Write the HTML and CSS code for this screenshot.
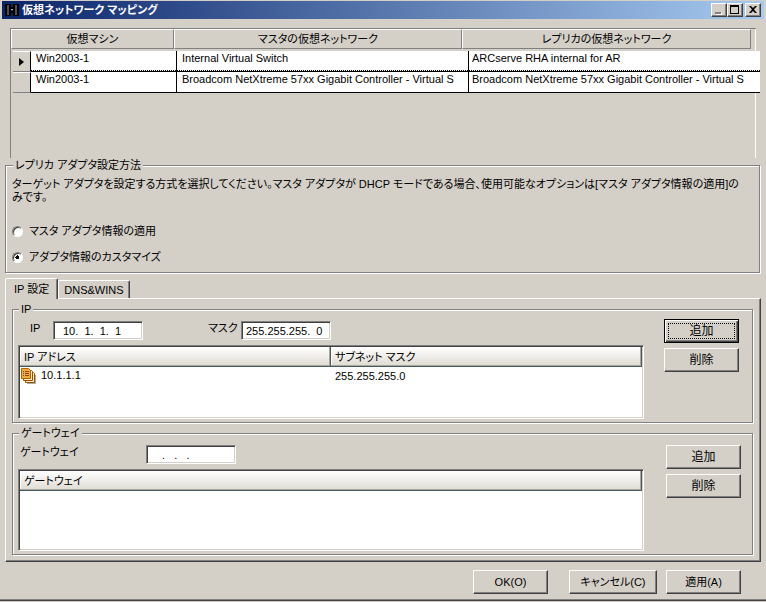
FILE: index.html
```html
<!DOCTYPE html>
<html lang="ja">
<head>
<meta charset="utf-8">
<meta name="viewport" content="width=device-width, initial-scale=1">
<title>仮想ネットワーク マッピング</title>
<link rel="stylesheet" href="styles.css">
</head>
<body>
<main class="window">
  <header class="titlebar">
    <svg class="title-icon" width="14" height="12" viewBox="0 0 14 12" aria-hidden="true">
      <path d="M0 0h6v12H0zM8 0h6v12H8z" fill="#000"/>
      <path d="M2 1h2v10H2zM10 1h2v10h-2z" fill="#505050"/>
      <path d="M6 3h2v2H6zM6 7h2v2H6z" fill="#000"/>
      <path d="M6 5h2v1H6z" fill="#b0b0b0"/>
    </svg>
    <h1 class="title">仮想ネットワーク マッピング</h1>
    <div class="caption-buttons">
      <button class="caption" type="button" aria-label="最小化"><svg width="12" height="11" viewBox="0 0 12 11"><path d="M3 9h6v2H3z" fill="#fff"/><path d="M2 8h6v2H2z" fill="#808080"/></svg></button>
      <button class="caption" type="button" aria-label="最大化"><svg width="12" height="11" viewBox="0 0 12 11"><path d="M1 1h9v9H1zM2 3v6h7V3z" fill="#000" fill-rule="evenodd"/></svg></button>
      <button class="caption caption-close" type="button" aria-label="閉じる"><svg width="12" height="11" viewBox="0 0 12 11"><path d="M2 2h2l2 2 2-2h2L7 5.500l3 3.500H8L6 7 4 9H2l3-3.500z" fill="#000"/></svg></button>
    </div>
  </header>

  <div class="mapping-panel">
    <table class="mapping">
      <thead>
        <tr class="mapping-head"><th>仮想マシン</th><th>マスタの仮想ネットワーク</th><th>レプリカの仮想ネットワーク</th></tr>
      </thead>
      <tbody>
        <tr class="mapping-row current">
          <th class="selector"><svg width="5" height="8" viewBox="0 0 5 8" aria-hidden="true"><path d="M0 0v8l5-4z" fill="#000"/></svg></th>
          <td>Win2003-1</td><td>Internal Virtual Switch</td><td>ARCserve RHA internal for AR</td>
        </tr>
        <tr class="mapping-row">
          <th class="selector"></th>
          <td>Win2003-1</td><td>Broadcom NetXtreme 57xx Gigabit Controller - Virtual S</td><td>Broadcom NetXtreme 57xx Gigabit Controller - Virtual S</td>
        </tr>
      </tbody>
    </table>
  </div>

  <fieldset class="group method">
    <legend>レプリカ アダプタ設定方法</legend>
    <p class="hint">ターゲット アダプタを設定する方式を選択してください。マスタ アダプタが DHCP モードである場合、使用可能なオプションは[マスタ アダプタ情報の適用]の<br>みです。</p>
    <label class="choice"><input type="radio" name="method">マスタ アダプタ情報の適用</label>
    <label class="choice"><input type="radio" name="method" checked>アダプタ情報のカスタマイズ</label>
  </fieldset>

  <div class="tabs" role="tablist">
    <button class="tab active" type="button" role="tab" aria-selected="true">IP 設定</button>
    <button class="tab" type="button" role="tab" aria-selected="false">DNS&amp;WINS</button>
  </div>

  <section class="tab-panel" role="tabpanel">
    <fieldset class="group">
      <legend>IP</legend>
      <div class="editor">
        <div>
          <div class="fields address-fields">
            <label for="ip">IP</label>
            <input class="box box-ip" id="ip" type="text" value="10.  1.  1.  1">
            <label for="mask">マスク</label>
            <input class="box" id="mask" type="text" value="255.255.255.  0">
          </div>
          <div class="list list-ip">
            <table>
              <thead><tr><th>IP アドレス</th><th>サブネット マスク</th></tr></thead>
              <tbody><tr>
                <td><svg class="pages" width="15" height="16" viewBox="0 0 15 16" aria-hidden="true">
                  <path d="M6 7h9v9H6z" fill="#aaa"/>
                  <path d="M4.500 4.500h8l1 1v9h-9z" fill="#ffe8bd" stroke="#9a5200"/>
                  <path d="M2.500 2.500h8l1 1v9h-9z" fill="#ffe8bd" stroke="#9a5200"/>
                  <path d="M.5 .5h7l2 2v8h-9z" fill="#f5aa3c" stroke="#b56500"/>
                  <path d="M2 3h1v1H2zM4 3h4v1H4zM2 5h1v1H2zM4 5h4v1H4zM2 7h1v1H2zM4 7h4v1H4z" fill="#854600"/>
                </svg>10.1.1.1</td>
                <td>255.255.255.0</td>
              </tr></tbody>
            </table>
          </div>
        </div>
        <div class="actions">
          <button class="button default" type="button">追加</button>
          <button class="button" type="button">削除</button>
        </div>
      </div>
    </fieldset>

    <fieldset class="group">
      <legend>ゲートウェイ</legend>
      <div class="editor editor-gateway">
        <div>
          <div class="fields gateway-fields">
            <label for="gateway">ゲートウェイ</label>
            <input class="box box-empty" id="gateway" type="text" value=".   .   .">
          </div>
          <div class="list list-gateway">
            <table>
              <thead><tr><th>ゲートウェイ</th></tr></thead>
            </table>
          </div>
        </div>
        <div class="actions actions-gateway">
          <button class="button" type="button">追加</button>
          <button class="button" type="button">削除</button>
        </div>
      </div>
    </fieldset>
  </section>

  <footer class="footer">
    <button class="button ok" type="button">OK(O)</button>
    <button class="button cancel" type="button">キャンセル(C)</button>
    <button class="button" type="button">適用(A)</button>
  </footer>
</main>
</body>
</html>
```
FILE: styles.css
```css
:root {
  --face: #d4d0c8;
  --shadow: #808080;
  --dark: #404040;
}

* { box-sizing: border-box; }

body {
  margin: 0;
  background: var(--face);
  color: #000;
  font: 11px/14px "Liberation Sans", "Noto Sans CJK JP", sans-serif;
  font-feature-settings: "palt";
}

button, input {
  font: inherit;
  font-feature-settings: inherit;
  color: inherit;
}

table { border-spacing: 0; }
th { font-weight: normal; }

.window {
  padding-top: 1px;
  border-bottom: 1px solid var(--dark);
  box-shadow: inset 0 -1px var(--shadow);
}

/* Title bar */
.titlebar {
  display: flex;
  align-items: center;
  height: 18px;
  margin: 0 2px;
  padding: 0 3px;
  background: linear-gradient(to right, #0a246a, #a6caf0);
  color: #fff;
}
.title-icon { margin-right: 3px; }
.title {
  flex: 1;
  margin: 0;
  font-size: 11px;
  line-height: 18px;
}
.caption-buttons { display: flex; }
.caption {
  display: flex;
  width: 16px;
  height: 14px;
  padding: 0 0 0 1px;
  background: var(--face);
  border: 1px solid;
  border-color: #fff var(--dark) var(--dark) #fff;
  box-shadow: inset -1px -1px var(--shadow);
}
.caption-close { margin-left: 2px; }

/* Mapping grid */
.mapping-panel {
  height: 130px;
  margin: 9px 10px 0;
  border: solid var(--shadow);
  border-width: 1px 0 0 1px;
  box-shadow: inset -1px 0 #fff;
}
.mapping, .mapping thead, .mapping tbody { display: block; }
.mapping-head {
  display: grid;
  grid-template-columns: 163fr 288fr 289fr;
  margin: 0 5px 2px 0;
}
.mapping-head th {
  height: 20px;
  padding: 0;
  line-height: 18px;
  border: 1px solid;
  border-color: #fff var(--shadow) var(--shadow) #fff;
}
.mapping-row {
  display: grid;
  grid-template-columns: 18px 146fr 292fr 291fr;
  height: 21px;
  margin: 0 -4px 0 2px;
}
.mapping-row td {
  padding: 0 5px;
  background: #fff;
  border: solid #000;
  border-width: 0 1px 1px 0;
  white-space: nowrap;
  overflow: hidden;
}
.mapping-row td:nth-child(4) {
  padding-left: 3px;
  border-right: 0;
}
.current td {
  background:
    repeating-linear-gradient(to right, #000 0 1px, #fff 1px 2px) bottom / 100% 1px no-repeat,
    #fff;
}
.mapping-row .selector {
  display: flex;
  align-items: center;
  padding: 0 0 0 6px;
  background: var(--face);
  border: solid;
  border-color: #fff #000 var(--shadow);
  border-width: 1px 1px 1px 0;
}

/* Group boxes */
.group {
  min-width: 0;
  margin: 0;
  padding: 0;
  border: 1px solid var(--shadow);
  box-shadow: 1px 1px #fff, inset 1px 1px #fff;
}
.group legend {
  margin-left: 6px;
  padding: 0 2px;
  background: var(--face);
}
.method {
  margin: 0 6px 0 5px;
  padding: 6px 6px 2px;
}
.method legend { margin-left: 1px; }
.hint {
  margin: 0 0 14px;
  line-height: 13px;
}
.choice {
  display: flex;
  align-items: center;
  height: 26px;
}
.choice input {
  appearance: none;
  width: 11px;
  height: 11px;
  margin: 0 6px 0 0;
  border: 1px solid;
  border-color: var(--shadow) #fff #fff var(--shadow);
  border-radius: 50%;
  background: #fff;
  box-shadow: inset 1px 1px var(--dark);
}
.choice input:checked { background: radial-gradient(circle, #000 0 2px, #fff 2px); }

/* Tabs */
.tabs {
  display: flex;
  align-items: flex-end;
  height: 25px;
  margin: 0 5px;
}
.tab {
  height: 18px;
  padding: 0 5px;
  background: var(--face);
  border: solid;
  border-color: #fff var(--dark) #fff #fff;
  border-width: 1px 1px 0;
  border-radius: 2px 2px 0 0;
  box-shadow: inset -1px 0 var(--shadow);
}
.tab.active {
  z-index: 1;
  height: 21px;
  margin-bottom: -1px;
  padding: 0 8px;
}
.tab-panel {
  margin: 0 5px;
  padding: 3px 7px 6px 6px;
  border: 1px solid;
  border-color: #fff var(--dark) var(--dark) #fff;
  box-shadow: inset -1px -1px var(--shadow);
}
.tab-panel .group + .group { margin-top: 3px; }

/* Address editors */
.editor {
  display: grid;
  grid-template-columns: 1fr 75px;
  column-gap: 20px;
  padding: 0 13px 3px 5px;
}
.editor-gateway {
  column-gap: 22px;
  padding-right: 11px;
}
.fields {
  display: grid;
  align-items: center;
  height: 29px;
}
.address-fields {
  grid-template-columns: 23px 155px 33px 90px;
  padding-left: 12px;
}
.gateway-fields {
  grid-template-columns: 126px 90px;
  padding-left: 2px;
}
.fields label { padding-bottom: 6px; }
.box {
  width: 90px;
  height: 19px;
  padding: 0 4px;
  background: #fff;
  border: 1px solid;
  border-color: var(--shadow) #fff #fff var(--shadow);
  border-radius: 0;
  box-shadow: inset 1px 1px var(--dark), inset -1px -1px var(--face);
}
.box-ip { padding-left: 9px; }
.box-empty { padding-left: 15px; }

.list {
  padding: 1px;
  background: #fff;
  border: 1px solid;
  border-color: var(--shadow) #fff #fff var(--shadow);
  box-shadow: inset 1px 1px var(--dark), inset -1px -1px var(--face);
}
.list-ip { height: 74px; }
.list-gateway { height: 82px; }
.list table {
  width: 100%;
  table-layout: fixed;
}
.list th {
  height: 20px;
  padding: 0 4px;
  text-align: left;
  background: linear-gradient(#fff, #dedbd2);
  border: solid #465a64;
  border-width: 0 1px 1px 0;
  box-shadow: inset -1px -1px #aca899, inset 1px 0 #fff;
}
.list td {
  height: 18px;
  padding: 0 4px;
}
.list td:first-child { padding: 0 1px; }
.pages {
  margin-right: 5px;
  vertical-align: middle;
}

/* Push buttons */
.button {
  width: 75px;
  height: 24px;
  padding: 0;
  background: var(--face);
  border: 1px solid;
  border-color: #fff var(--dark) var(--dark) #fff;
  border-radius: 0;
  box-shadow: inset -1px -1px var(--shadow);
}
.default {
  border-color: #000;
  box-shadow: inset 1px 1px #fff, inset -1px -1px var(--dark), inset -2px -2px var(--shadow);
  outline: 1px dotted #000;
  outline-offset: -5px;
}
.actions {
  display: flex;
  flex-direction: column;
  gap: 5px;
  padding-top: 3px;
  font-size: 12px;
}
.actions-gateway { padding-top: 5px; }

.footer {
  display: flex;
  justify-content: flex-end;
  padding: 8px 25px 6px;
}
.ok { margin-right: 21px; }
.cancel {
  width: 88px;
  margin-right: 9px;
}
```
